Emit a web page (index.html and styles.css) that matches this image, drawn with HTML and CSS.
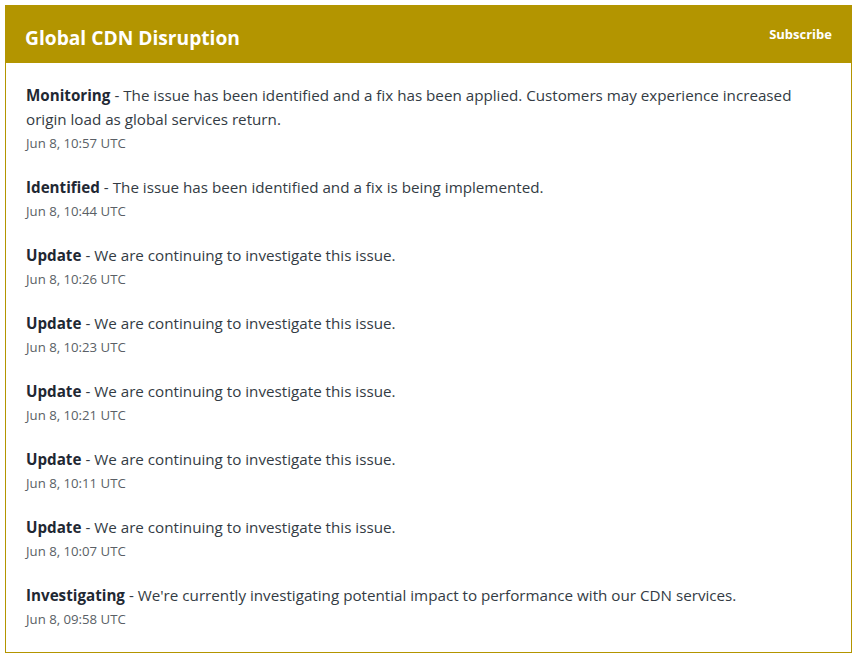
FILE: index.html
```html
<!DOCTYPE html>
<html>
<head>
<meta charset="utf-8">
<link rel="stylesheet" href="styles.css">
</head>
<body>
<div class="card">
  <div class="card-header">
    <h1 class="title">Global CDN Disruption</h1>
    <a class="subscribe" href="#">Subscribe</a>
  </div>
  <div class="card-body">
    <div class="update">
      <div class="text"><strong>Monitoring</strong> - The issue has been identified and a fix has been applied. Customers may experience increased origin load as global services return.</div>
      <div class="date">Jun 8, 10:57 UTC</div>
    </div>
    <div class="update">
      <div class="text"><strong>Identified</strong> - The issue has been identified and a fix is being implemented.</div>
      <div class="date">Jun 8, 10:44 UTC</div>
    </div>
    <div class="update">
      <div class="text"><strong>Update</strong> - We are continuing to investigate this issue.</div>
      <div class="date">Jun 8, 10:26 UTC</div>
    </div>
    <div class="update">
      <div class="text"><strong>Update</strong> - We are continuing to investigate this issue.</div>
      <div class="date">Jun 8, 10:23 UTC</div>
    </div>
    <div class="update">
      <div class="text"><strong>Update</strong> - We are continuing to investigate this issue.</div>
      <div class="date">Jun 8, 10:21 UTC</div>
    </div>
    <div class="update">
      <div class="text"><strong>Update</strong> - We are continuing to investigate this issue.</div>
      <div class="date">Jun 8, 10:11 UTC</div>
    </div>
    <div class="update">
      <div class="text"><strong>Update</strong> - We are continuing to investigate this issue.</div>
      <div class="date">Jun 8, 10:07 UTC</div>
    </div>
    <div class="update">
      <div class="text"><strong>Investigating</strong> - We're currently investigating potential impact to performance with our CDN services.</div>
      <div class="date">Jun 8, 09:58 UTC</div>
    </div>
  </div>
</div>
</body>
</html>
```
FILE: styles.css
```css
html, body {
  margin: 0;
  padding: 0;
  background: #ffffff;
}
body {
  padding: 5px 4px 2px 5px;
  font-family: "Open Sans", "Noto Sans", sans-serif;
  color: #333;
}
.card {
  border: 1px solid #b39500;
  background: #fff;
}
.card-header {
  background: #b39500;
  height: 57px;
  display: flex;
  justify-content: space-between;
  align-items: flex-start;
  padding: 0 19px 0 19px;
}
.title {
  margin: 0;
  margin-top: 18px;
  font-size: 19.2px;
  line-height: 28px;
  font-weight: 700;
  color: #fff;
}
.subscribe {
  margin-top: 19px;
  font-size: 13px;
  line-height: 18px;
  font-weight: 700;
  color: #fff;
  text-decoration: none;
}
.card-body {
  padding: 20px 20px 21px 20px;
  display: flex;
  flex-direction: column;
  gap: 20px;
}
.text {
  font-size: 15.2px;
  line-height: 24px;
  color: #333b44;
}
.text strong {
  color: #1f2833;
  font-weight: 700;
}
.date {
  font-size: 13.2px;
  line-height: 24px;
  color: #5a5f66;
}
```
